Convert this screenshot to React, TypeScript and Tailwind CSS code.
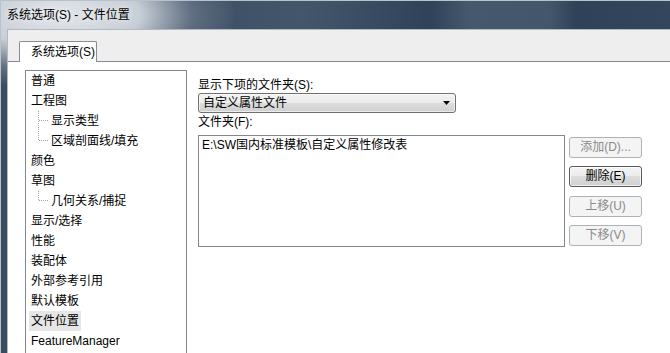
import React from 'react';

const FONT = 'font-["Liberation_Sans","Noto_Sans_CJK_SC",sans-serif]';

interface TreeItem {
  label: string;
  child?: boolean;
  last?: boolean;
  selected?: boolean;
}

const items: TreeItem[] = [
  { label: '普通' },
  { label: '工程图' },
  { label: '显示类型', child: true },
  { label: '区域剖面线/填充', child: true, last: true },
  { label: '颜色' },
  { label: '草图' },
  { label: '几何关系/捕捉', child: true, last: true },
  { label: '显示/选择' },
  { label: '性能' },
  { label: '装配体' },
  { label: '外部参考引用' },
  { label: '默认模板' },
  { label: '文件位置', selected: true },
  { label: 'FeatureManager' },
];

function TreeLine({ last }: { last?: boolean }) {
  return (
    <svg width="20" height="20" className="shrink-0" shapeRendering="crispEdges">
      <line x1="9.5" y1="0" x2="9.5" y2={last ? 10 : 20} stroke="#a0a0a0" strokeWidth="1" strokeDasharray="1 1" />
      <line x1="10" y1="9.5" x2="20" y2="9.5" stroke="#a0a0a0" strokeWidth="1" strokeDasharray="1 1" />
    </svg>
  );
}

function WinButton({ label, disabled, className }: { label: string; disabled?: boolean; className?: string }) {
  return (
    <button
      type="button"
      className={
        'w-[73px] h-[21px] rounded-[3px] border text-[12px] leading-[19px] flex items-center justify-center ' +
        (disabled
          ? 'border-[#adb2b5] bg-[#f4f4f4] text-[#8a8a8a] '
          : 'border-[#5a5a5a] text-black bg-[linear-gradient(#f4f4f4_0%,#ebebeb_50%,#dddddd_50%,#cfcfcf_100%)] shadow-[inset_0_0_0_1px_rgba(255,255,255,0.7)] ') +
        (className ?? '')
      }
    >
      {label}
    </button>
  );
}

export default function App() {
  return (
    <div
      className={
        FONT +
        ' w-[670px] h-[353px] overflow-hidden flex flex-col text-black text-[12px] border-t border-l border-[#b9c2cb] ' +
        '[background:radial-gradient(ellipse_175px_75px_at_60px_14px,rgba(232,235,239,0.97)_0%,rgba(216,221,227,0.9)_45%,rgba(150,162,176,0.45)_75%,rgba(60,80,100,0)_100%),linear-gradient(90deg,#3a4c61_0%,#2f4258_27%,#3f5166_33%,#44566a_45%,#3a4c61_55%,#2f4258_64%,#46586c_70%,#44566a_82%,#2f4258_86%,#33465c_100%)]'
      }
    >
      {/* Title bar */}
      <div className="h-[28px] shrink-0 flex items-center pl-[6px] text-[12px] [text-shadow:0_0_6px_rgba(255,255,255,0.95)]">
        系统选项(S) - 文件位置
      </div>

      {/* Client area */}
      <div className="ml-[6px] flex-1 flex flex-col border-l border-t border-[#b2b9c1] bg-[#eeeeee]">
        {/* Tab strip */}
        <div className="h-[32px] shrink-0 flex items-end pl-[11px] -mb-px relative z-10">
          <div className="w-[78px] h-[21px] bg-white border border-b-0 border-[#898c95] rounded-t-[2px] pl-[11px] leading-[20px] whitespace-nowrap">
            系统选项(S)
          </div>
        </div>

        {/* Tab page */}
        <div className="flex-1 bg-white border-t border-[#898c95] flex items-start pt-[8px] pl-[17px]">
          {/* Category list */}
          <div className="w-[162px] h-[300px] shrink-0 border border-[#828790] bg-white">
            {items.map((it) => (
              <div key={it.label} className="h-[20px] flex items-center pl-[3px] whitespace-nowrap">
                {it.child && <TreeLine last={it.last} />}
                <span className={'px-[2px] h-[20px] leading-[20px] ' + (it.selected ? 'bg-[#e6e6e6]' : '')}>
                  {it.label}
                </span>
              </div>
            ))}
          </div>

          {/* Right side */}
          <div className="ml-[11px] flex flex-col pt-[7px]">
            <div className="h-[16px] leading-[16px]">显示下项的文件夹(S):</div>
            <div className="w-[258px] h-[20px] rounded-[3px] border border-[#707070] bg-[linear-gradient(#f2f2f2_0%,#ebebeb_50%,#dddddd_50%,#cfcfcf_100%)] shadow-[inset_0_0_0_1px_rgba(255,255,255,0.6)] flex items-center justify-between pl-[4px] pr-[4px]">
              <span className="leading-[18px]">自定义属性文件</span>
              <svg width="7" height="4" viewBox="0 0 7 4" className="mr-[1px]">
                <polygon points="0,0 7,0 3.5,4" fill="#000" />
              </svg>
            </div>
            <div className="h-[16px] leading-[16px] mt-[1px]">文件夹(F):</div>
            <div className="flex items-start mt-[5px]">
              <div className="w-[367px] h-[112px] border border-[#828790] bg-white px-[3px] pt-[1px] leading-[16px] whitespace-nowrap">
                E:\SW国内标准模板\自定义属性修改表
              </div>
              <div className="ml-[4px] flex flex-col pt-[2px]">
                <WinButton label="添加(D)..." disabled />
                <WinButton label="删除(E)" className="mt-[8px]" />
                <WinButton label="上移(U)" disabled className="mt-[9px]" />
                <WinButton label="下移(V)" disabled className="mt-[8px]" />
              </div>
            </div>
          </div>
        </div>
      </div>
    </div>
  );
}
